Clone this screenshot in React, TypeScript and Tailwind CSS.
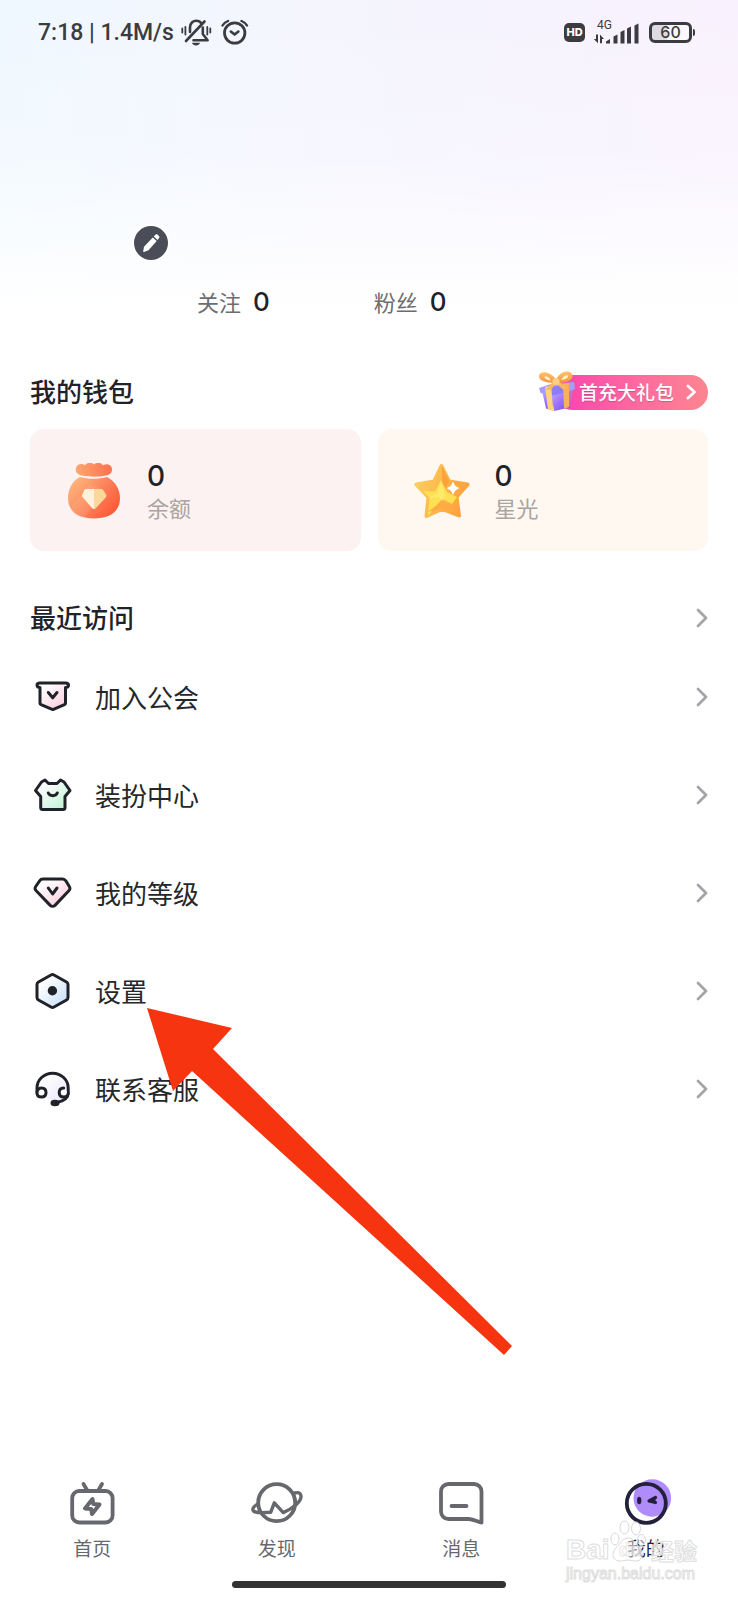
import type { ReactNode } from "react";

const INK = "#1f2329";

/* ---------- status bar ---------- */

function StatusBar() {
  return (
    <div className="flex h-16 items-center justify-between pl-[38px] pr-[43px] text-[#3c3c40]">
      <div className="flex items-center">
        <span className="pt-[2px] font-['Roboto','Noto_Sans',sans-serif] text-[23px] font-medium leading-8">
          7:18 | 1.4M/s
        </span>
        <svg className="ml-[6px] h-7 w-8" viewBox="0 0 32 28" fill="none" stroke="currentColor" strokeLinecap="round" aria-label="静音">
          <path d="M10 14V9.5C10 5 13 2.8 16.3 2.8c2.2 0 4 1 5.2 2.7M22.8 9.5V16l4.8 6.2H13.5" strokeWidth="2.6" strokeLinejoin="round" />
          <path d="M24.5 3.5L6 23" strokeWidth="2.6" />
          <path d="M2.3 10.5v4M5.4 9v7.5M27.3 9v7.5M30.3 10.5v4" strokeWidth="1.8" />
          <path d="M12 24.8h8c-.6 1.8-2 2.6-4 2.6s-3.4-.8-4-2.6z" fill="currentColor" stroke="none" />
        </svg>
        <svg className="ml-[9px] h-7 w-7" viewBox="0 0 28 28" fill="none" stroke="currentColor" strokeLinecap="round" aria-label="闹钟">
          <circle cx="13.7" cy="15" r="10.2" strokeWidth="2.8" />
          <path d="M1.5 7.5C2.5 5.5 4 4.2 7 3M20.5 3c3 1.2 4.5 2.5 5.5 4.5" strokeWidth="2.4" />
          <path d="M9.8 13.6l3.8 3 3.8-3" strokeWidth="2.6" strokeLinejoin="round" />
        </svg>
      </div>

      <div className="flex items-center font-['Inter',sans-serif]">
        <span className="flex h-[19px] w-[21px] items-center justify-center rounded-[5px] bg-[#3c3c40] text-[11px] font-extrabold text-white">
          HD
        </span>
        <div className="relative ml-2 h-6 w-[47px]">
          <span className="absolute left-1 top-0 font-['Roboto',sans-serif] text-[12px] leading-[11px]">4G</span>
          <svg className="h-6 w-[47px]" viewBox="0 0 47 24" fill="currentColor" aria-label="信号">
            <path d="M5 14.5v8.7L.8 19H3v-4.500zM7 23.200v-8.700l4 4.500H9v4.200z" />
            <path d="M13 23.500v-2l4-2.500v4.500zM20.500 23.500v-7l4-2v9zM27.500 23.500V12l4-2v13.500zM34 23.500V8.500l4-2v17zM41.500 23.500v-18l4-2v20z" />
          </svg>
        </div>
        <div className="ml-[9px] flex h-[21px] w-[43px] items-center justify-center rounded-md border-[3px] border-current bg-linear-to-r from-[#dcdae3] from-40% to-white/40 to-40% text-[16px] font-medium leading-4">
          60
        </div>
        <span className="ml-px h-[7px] w-[2px] rounded-r-sm bg-current" />
      </div>
    </div>
  );
}

/* ---------- small pieces ---------- */

function Chevron() {
  return (
    <svg className="h-5 w-3" viewBox="0 0 12 20" fill="none" stroke="#a3a5a8" strokeWidth="2.8" strokeLinecap="round" strokeLinejoin="round" aria-hidden="true">
      <path d="M2 2l8 8-8 8" />
    </svg>
  );
}

function Stat({ label, value }: { label: string; value: number }) {
  return (
    <div className="flex items-center gap-3">
      <span className="text-[22px] text-[#6c6d70]">{label}</span>
      <span className="font-['Inter',sans-serif] text-[26px] font-medium text-[#1f2329]">{value}</span>
    </div>
  );
}

function GiftIcon() {
  return (
    <svg className="absolute -left-[18px] -top-[5px] h-[42px] w-10" viewBox="0 0 40 42" aria-hidden="true">
      <defs>
        <linearGradient id="giftFront" x1="0" y1="0" x2="1" y2="1">
          <stop offset="0" stopColor="#c9a8fb" />
          <stop offset="1" stopColor="#6a3cf0" />
        </linearGradient>
        <linearGradient id="giftSide" x1="0" y1="0" x2="1" y2="1">
          <stop offset="0" stopColor="#8f7bfa" />
          <stop offset="1" stopColor="#ff5c9a" />
        </linearGradient>
        <linearGradient id="giftBow" x1="0" y1="0" x2="0" y2="1">
          <stop offset="0" stopColor="#ffc46a" />
          <stop offset="1" stopColor="#f5923c" />
        </linearGradient>
      </defs>
      <path d="M5 21l11 2v17.500L9 38.500z" fill="url(#giftFront)" />
      <path d="M14 23l13-1 9-2-3 17.500-16 3.500z" fill="url(#giftFront)" />
      <path d="M27 20l9.500-3-3.500 19-6 3z" fill="url(#giftSide)" />
      <path d="M2 18l12-4 23-2 1 7-10 4-12 2.500-12.500-2.500z" fill="#a79bfd" />
      <path d="M14 17l13-2 1 8-13 2.500z" fill="#8e7df7" />
      <path d="M8 17l6-1 2.500 25-5.500-1.500z" fill="#ffd57c" />
      <path d="M26 14l6-1v24l-5 2z" fill="#f7b05c" />
      <path d="M19 13C14 13 3 12.500 2 7 1 1 12-.5 19 9.500z" fill="url(#giftBow)" />
      <path d="M19 13c6 0 16-1 16.500-6.500C36-.5 24-1 19 9.500z" fill="url(#giftBow)" />
      <path d="M14 10.500C10 10 7.500 8.500 7.500 7s4-1.500 6.500 3.500zM24 10c4-.5 7-2 7-3.800s-4-1-7 3.800z" fill="#fff0d2" />
      <path d="M17 11l-9 9 6-.5 5-6 7 6 5-1.500-10-7z" fill="#fbb75f" />
      <circle cx="19" cy="11.500" r="3.600" fill="#ffcf86" />
    </svg>
  );
}

function MoneyBag() {
  return (
    <svg className="size-14 shrink-0" viewBox="0 0 56 56" aria-hidden="true">
      <defs>
        <linearGradient id="bag" x1="0.1" y1="0.2" x2="1" y2="0.8">
          <stop offset="0" stopColor="#ffb078" />
          <stop offset="0.5" stopColor="#fb8059" />
          <stop offset="1" stopColor="#ff5431" />
        </linearGradient>
        <linearGradient id="bagTop" x1="0" y1="0" x2="1" y2="0">
          <stop offset="0" stopColor="#fda76f" />
          <stop offset="1" stopColor="#fd7150" />
        </linearGradient>
      </defs>
      <path d="M16 12.500c-4-1-7-3-6-7.500.8-4 6-5.300 9-2.700 2-3 6.500-3.300 9-.8 2.500-2.500 7-2.200 9 .8 3.500-2.300 8-1 8.800 2.700 1 4.500-2 6.700-6 7.500-7 1.600-16.800 1.600-23.800 0z" fill="url(#bagTop)" />
      <path d="M14 14c9 2.400 18 2.400 27 0 8 4 13 12 13 21C54 49 43 55.500 28 55.500S2 49 2 35c0-9 4-17 12-21z" fill="url(#bag)" />
      <path d="M4 46l20-25 14 6-20 28c-6-1.500-11-4.500-14-9z" fill="#ffc59a" opacity=".18" />
      <path d="M20 26h15a2 2 0 0 1 1.600.8l3.300 4.700a2 2 0 0 1-.1 2.400L29.800 45a2.500 2.500 0 0 1-3.800 0L16.500 34a2 2 0 0 1-.1-2.400l2-4.800A2 2 0 0 1 20 26z" fill="#fff1dc" />
      <path d="M28 26h7a2 2 0 0 1 1.600.8l3.300 4.700a2 2 0 0 1-.1 2.400L29.800 45a2.400 2.400 0 0 1-1.800.9z" fill="#ffd79a" />
    </svg>
  );
}

function StarIcon() {
  return (
    <svg className="size-14 shrink-0" viewBox="0 0 56 56" strokeLinejoin="round" aria-hidden="true">
      <defs>
        <linearGradient id="star" x1="0" y1="0.3" x2="1" y2="0.6">
          <stop offset="0" stopColor="#fccd5c" />
          <stop offset="1" stopColor="#ffa03c" />
        </linearGradient>
      </defs>
      <path d="M27.500 3l7.500 15.500L53.500 21.500 42.500 34l2.500 18.500L28 46 12.500 53 14.500 34 2.500 21.500l17.500-3z" fill="url(#star)" stroke="url(#star)" strokeWidth="4" />
      <path d="M28 3v30l7.200-14.500z" fill="#fba338" />
      <path d="M27 17l6 12 10 5-5 7-10-5-14 17 1.500-18L9 28l12 .5z" fill="#ffe052" />
      <path d="M14 49l14-11 14 11-14-3.500z" fill="#fdab43" />
      <path d="M27 18l-3 12-9 5 10-1 3 4 3-5z" fill="#fff07e" opacity=".6" />
      <path d="M39 20q1 4 5 5.300-4 1.200-5 5.300-1-4.100-5-5.300 4-1.300 5-5.300z" fill="#fff" stroke="#fff" strokeWidth="1.500" />
    </svg>
  );
}

function WalletCard({ icon, value, label, tone }: { icon: ReactNode; value: number; label: string; tone: string }) {
  return (
    <a href="#" className={`flex h-[122px] flex-1 items-center gap-[25px] rounded-[14px] pl-9 pt-[2px] ${tone}`}>
      {icon}
      <div className="flex flex-col">
        <span className="font-['Inter',sans-serif] text-[28px] font-medium leading-8 text-[#1f2329]">{value}</span>
        <span className="text-[22px] leading-[30px] text-[#aaa4a2]">{label}</span>
      </div>
    </a>
  );
}

/* ---------- menu ---------- */

function MenuIcon({ id, tint, children }: { id: string; tint: string; children: ReactNode }) {
  return (
    <svg className="size-10 shrink-0" viewBox="0 0 40 40" fill={`url(#${id})`} stroke={INK} strokeWidth="3" strokeLinecap="round" strokeLinejoin="round" aria-hidden="true">
      <defs>
        <linearGradient id={id} x1="0.2" y1="0.2" x2="1" y2="1">
          <stop offset="0" stopColor="#fff" />
          <stop offset="1" stopColor={tint} />
        </linearGradient>
      </defs>
      {children}
    </svg>
  );
}

const menu = [
  {
    label: "加入公会",
    icon: (
      <MenuIcon id="guild" tint="#fbc3d6">
        <path d="M8 10.500C6.300 10.500 5 9.500 5 8s1.300-2 3-2h25.500c1.700 0 3 .5 3 2s-1.300 2.500-3 2.500v15.700a1.500 1.500 0 0 1-1 1.400l-11.700 5-11.800-5a1.500 1.500 0 0 1-1-1.400z" />
        <path d="M16.300 15.500l4.400 5.300 4.300-5.300" fill="none" />
      </MenuIcon>
    ),
  },
  {
    label: "装扮中心",
    icon: (
      <MenuIcon id="outfit" tint="#b5f0cf">
        <path d="M13 5l3.500 3.500h8.500L28.500 5l3.500 2 6 8.500-5 6v11a2 2 0 0 1-2 2H10.700a2 2 0 0 1-2-2v-11L3.500 15.500 9.500 7z" />
        <path d="M16.300 18c1.500 3.500 7.500 3.500 9 0" fill="none" />
      </MenuIcon>
    ),
  },
  {
    label: "我的等级",
    icon: (
      <MenuIcon id="level" tint="#fbc3d6">
        <path d="M11 6h19.500a4 4 0 0 1 3.300 1.800l3.500 5.700a3.500 3.500 0 0 1-.5 4.300L23 32.400a3.500 3.500 0 0 1-4.800 0L4.200 17.800a3.500 3.500 0 0 1-.5-4.300L7.600 7.800A4 4 0 0 1 11 6z" />
        <path d="M16.300 15l4.300 6 4.400-6" fill="none" />
      </MenuIcon>
    ),
  },
  {
    label: "设置",
    pointed: true,
    icon: (
      <MenuIcon id="settings" tint="#c3dcfb">
        <path d="M19 4a3 3 0 0 1 3 0l12.500 7a3 3 0 0 1 1.500 2.500v13a3 3 0 0 1-1.500 2.500L22 36a3 3 0 0 1-3 0L6.500 29A3 3 0 0 1 5 26.500v-13A3 3 0 0 1 6.500 11z" />
        <circle cx="20.400" cy="19.700" r="4.700" fill={INK} stroke="none" />
      </MenuIcon>
    ),
  },
  {
    label: "联系客服",
    icon: (
      <MenuIcon id="service" tint="#d9d3fb">
        <path d="M5 23.500V19a15.600 14.800 0 0 1 31.200 0v4.500c0 5-4.200 8.500-11.200 10.500" stroke="none" opacity=".6" />
        <path d="M5 23.500V19a15.600 14.800 0 0 1 31.200 0v4.500c0 5-4.200 8.500-11.200 10" fill="none" />
        <path d="M5 24c0-3 1.500-5 4.500-5s4.500 2 4.500 4.500S12.500 28 9.500 28 5 26.500 5 24zM36.200 24c0 2.500-1.500 4-4.500 4s-4.500-2-4.500-4.500 1.500-4.500 4.500-4.500" fill="#fff" />
        <ellipse cx="23" cy="34" rx="4.500" ry="3.200" fill={INK} stroke="none" />
      </MenuIcon>
    ),
  },
];

// Red pointer laid over the list, its tip just under the row's label
function Pointer() {
  return (
    <svg className="pointer-events-none absolute left-[117px] top-[66px] z-10 h-[348px] w-[366px]" viewBox="0 0 366 348" aria-hidden="true">
      <path d="M0 0l85 20-19 21 299 297-8 9L45 63 26 83z" fill="#f63510" />
    </svg>
  );
}

/* ---------- bottom nav ---------- */

const tabs = [
  {
    label: "首页",
    icon: (
      <>
        <rect x="6.200" y="11" width="40.400" height="31.500" rx="7" />
        <path d="M17.500 4l3.500 6M36 4l-3.500 6" />
        <path d="M26.500 19l.8 5 6.200.5-7.500 9.500-.8-5-6.200-.5z" strokeWidth="4" />
      </>
    ),
  },
  {
    label: "发现",
    icon: (
      <>
        <circle cx="25.700" cy="22.700" r="18.500" />
        <path d="M7 24c-4 2-5.500 4.200-5 6 .8 3 6 3 17.700 2.300l3.600-9.500 9 9.800C42 28.500 50.500 21.500 50 16c-.3-3.300-3-4-6.500-3" strokeWidth="3.400" />
      </>
    ),
  },
  {
    label: "消息",
    icon: (
      <>
        <path d="M46.500 42.500V11.500a7.500 7.500 0 0 0-7.500-7.500H13.500A7.500 7.500 0 0 0 6 11.500v20a7.500 7.500 0 0 0 7.500 7.500h20c5 0 8.500 3 13 3.500z" />
        <path d="M16.500 26h15" />
      </>
    ),
  },
  {
    label: "我的",
    active: true,
    icon: (
      <>
        <circle cx="32.300" cy="18" r="18.800" fill="#b08cfb" stroke="none" />
        <circle cx="26.300" cy="23.300" r="19.500" />
        <ellipse cx="19.200" cy="20.500" rx="2.200" ry="3.700" fill="currentColor" stroke="none" />
        <path d="M35.500 17.500l-6.500 3.500 6.500 1.500" strokeWidth="3.200" fill="currentColor" />
      </>
    ),
  },
];

function Watermark() {
  return (
    <div className="pointer-events-none absolute -top-1 right-[41px] w-[131px] text-white/70 [-webkit-text-stroke:1px_#dedede]" aria-hidden="true">
      <svg className="absolute left-[44px] top-0 h-[42px] w-9" viewBox="0 0 36 42" fill="#fff" fillOpacity=".5" stroke="#d8d8d8">
        <ellipse cx="5" cy="19" rx="4" ry="6" />
        <ellipse cx="14.500" cy="7.500" rx="4.500" ry="6.500" />
        <ellipse cx="26" cy="8.500" rx="4.500" ry="6.500" />
        <ellipse cx="31.500" cy="20" rx="4" ry="5.500" />
        <path d="M18 18c5 0 7 5 11 9s5 13-2 14c-3 .5-6-1-9-1s-6 1.500-9 1c-8-1-7-9-3-13s7-10 12-10z" />
      </svg>
      <div className="relative flex items-center justify-between pt-4 text-[23px] font-bold leading-7">
        <span className="font-['Liberation_Sans',sans-serif] text-[28px]">Bai</span>
        <span className="font-['Liberation_Sans',sans-serif] text-[19px] opacity-70">du</span>
        <span>经验</span>
      </div>
      <div className="font-['Liberation_Sans',sans-serif] text-[16px] leading-5">jingyan.baidu.com</div>
    </div>
  );
}

export default function App() {
  return (
    <div className="relative flex min-h-screen flex-col bg-white font-['Noto_Sans_CJK_SC',sans-serif]">
      {/* Pastel wash behind the profile header */}
      <div className="absolute inset-x-0 top-0 h-[310px] bg-[linear-gradient(to_bottom,transparent_0%,rgba(255,255,255,0.2)_50%,#fff_100%),linear-gradient(to_right,#eff8ff_0%,#f4f6fe_35%,#f6f3fe_70%,#f9f2fe_100%)]" />

      <div className="relative">
        <StatusBar />
      </div>

      <main className="relative px-[30px]">
        <button
          type="button"
          aria-label="编辑资料"
          className="ml-[104px] mt-[162px] flex size-[34px] items-center justify-center rounded-full bg-[#4a4d58] ring-2 ring-white/80"
        >
          <svg className="size-5" viewBox="0 0 20 20" fill="#fff" aria-hidden="true">
            <path d="M11.800 4.500l3.900 3.600-8.200 9.200-4.500 1.600c-.5.200-.9-.2-.8-.7L3 13.700z" />
            <path d="M12.800 3.400l1.500-1.700c.6-.6 1.500-.7 2.200-.1l1.400 1.300c.7.600.7 1.600.1 2.200L16.600 6.900z" />
          </svg>
        </button>

        <div className="ml-[167px] mt-[25px] flex h-8 gap-[104px]">
          <Stat label="关注" value={0} />
          <Stat label="粉丝" value={0} />
        </div>

        <section aria-labelledby="wallet" className="mt-[57px]">
          <div className="flex h-9 items-center justify-between">
            <h2 id="wallet" className="pb-[3px] text-[26px] font-medium leading-8 text-[#1f2329]">我的钱包</h2>
            <button
              type="button"
              className="relative flex h-[35px] items-center gap-3 rounded-full bg-linear-to-r from-[#fb3fae] to-[#fd8590] pl-6 pr-3 text-[19px] font-medium text-white"
            >
              <GiftIcon />
              <span className="text-shadow-xs">首充大礼包</span>
              <svg className="h-4 w-[10px]" viewBox="0 0 10 16" fill="none" stroke="#fff" strokeWidth="2.8" strokeLinecap="round" strokeLinejoin="round" aria-hidden="true">
                <path d="M2 2l6.500 6L2 14" />
              </svg>
            </button>
          </div>
          <div className="mt-[19px] flex gap-[17px]">
            <WalletCard icon={<MoneyBag />} value={0} label="余额" tone="bg-[#fdf2f2]" />
            <WalletCard icon={<StarIcon />} value={0} label="星光" tone="bg-[#fef8f1]" />
          </div>
        </section>

        <a href="#" className="mt-[47px] flex h-10 items-center justify-between">
          <h2 className="pb-[3px] text-[26px] font-medium leading-8 text-[#1f2329]">最近访问</h2>
          <Chevron />
        </a>

        <ul className="mt-[10px]">
          {menu.map((item) => (
            <li key={item.label} className="relative">
              <a href="#" className="flex h-[98px] items-center pl-[2px]">
                {item.icon}
                <span className="ml-[23px] flex-1 pb-px text-[26px] leading-8 text-[#26272a]">{item.label}</span>
                <Chevron />
              </a>
              {item.pointed && <Pointer />}
            </li>
          ))}
        </ul>
      </main>

      <footer className="relative mt-auto">
        <nav className="grid grid-cols-4">
          {tabs.map((tab) => (
            <a
              key={tab.label}
              href="#"
              className={`flex flex-col items-center gap-2 ${tab.active ? "text-[#22203a]" : "text-[#66686d]"}`}
            >
              <svg className="h-12 w-[52px] overflow-visible" viewBox="0 0 52 48" fill="none" stroke="currentColor" strokeWidth="3.8" strokeLinecap="round" strokeLinejoin="round" aria-hidden="true">
                {tab.icon}
              </svg>
              <span className="text-[19px] leading-6">{tab.label}</span>
            </a>
          ))}
        </nav>
        <div className="relative h-[21px]">
          <div className="absolute inset-x-0 -top-9">
            <Watermark />
          </div>
        </div>
        <div className="mx-auto mb-3 h-[7px] w-[37%] rounded-full bg-[#333]" />
      </footer>
    </div>
  );
}
